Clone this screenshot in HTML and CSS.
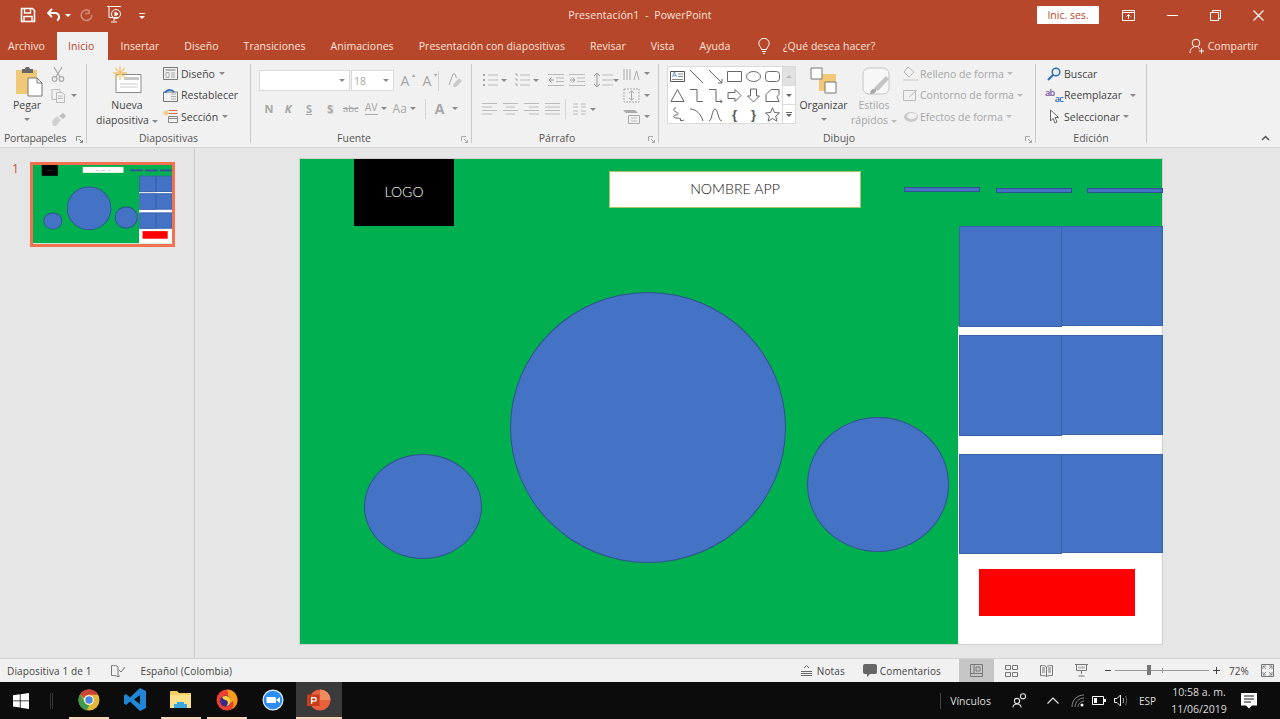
FILE: index.html
```html
<!DOCTYPE html>
<html lang="es">
<head>
<meta charset="utf-8">
<title>Presentación1 - PowerPoint</title>
<link rel="stylesheet" href="styles.css">
</head>
<body>
<div class="app">
  <header class="titlebar">
    <div class="qat">
      <svg width="16" height="16" viewBox="0 0 16 16" fill="none" stroke="#fff" stroke-width="1.6"><path d="M1.5 1.5h11l2 2v11h-13z"/><path d="M4.5 2v4h6V2M4 14.5V9.5h8v5" stroke-width="1.4"/></svg>
      <svg class="q-undo" width="16" height="14" viewBox="0 0 16 14" fill="none" stroke="#fff" stroke-width="1.8"><path d="M6 1L2 5l4 4"/><path d="M2 5h7a4 4 0 0 1 2 7.5"/></svg>
      <span class="caret-w"></span>
      <svg class="q-redo" width="14" height="14" viewBox="0 0 14 14" fill="none" stroke="#cf8b78" stroke-width="1.6"><path d="M9 1.5v4h-4M9 2.5a5.3 5.3 0 1 0 2.8 4.5"/></svg>
      <svg class="q-show" width="18" height="20" viewBox="0 0 18 20" fill="none" stroke="#fff" stroke-width="1"><path d="M1 1.5h14M3 1.5v11h10M8 13v3M5 17h6"/><circle cx="10" cy="9" r="4.5"/><path d="M9 7l3 2-3 2z" fill="#fff"/></svg>
      <span class="q-more"></span>
    </div>
    <div class="doc-title">Presentación1 &nbsp;-&nbsp; PowerPoint</div>
    <div class="win">
      <span class="signin">Inic. ses.</span>
      <svg width="13" height="11" viewBox="0 0 13 11" fill="none" stroke="#fff"><path d="M.5.5h12v10H.5zM.5 2.5h12M6.5 9V4.5M4.5 6.5l2-2 2 2"/></svg>
      <svg class="w-min" width="11" height="1" viewBox="0 0 11 1"><path d="M0 0h11v1H0z" fill="#fff"/></svg>
      <svg width="11" height="11" viewBox="0 0 11 11" fill="none" stroke="#fff"><path d="M.5 2.5h8v8h-8zM2.5 2.5v-2h8v8h-2"/></svg>
      <svg width="11" height="11" viewBox="0 0 11 11" fill="none" stroke="#fff" stroke-width="1.1"><path d="M.5.5l10 10M10.5.5l-10 10"/></svg>
    </div>
  </header>

  <nav class="tabs">
    <span class="tab tab-first">Archivo</span>
    <span class="tab active">Inicio</span>
    <span class="tab">Insertar</span>
    <span class="tab">Diseño</span>
    <span class="tab">Transiciones</span>
    <span class="tab">Animaciones</span>
    <span class="tab">Presentación con diapositivas</span>
    <span class="tab">Revisar</span>
    <span class="tab">Vista</span>
    <span class="tab">Ayuda</span>
    <svg class="bulb" width="12" height="16" viewBox="0 0 12 16" fill="none" stroke="#fff"><path d="M3.5 11.5C3 9 .8 8 .8 5.5a5.2 5.2 0 0 1 10.4 0C11.2 8 9 9 8.5 11.5zM4 13.5h4M5 15.5h2"/></svg>
    <span class="tell">¿Qué desea hacer?</span>
    <span class="share">
      <svg width="16" height="16" viewBox="0 0 16 16" fill="none" stroke="#fff"><circle cx="7" cy="5" r="3.8"/><path d="M1 15c0-4 2-5.5 4-6M9 9.5c1 .3 1.5.7 2 1.3M12.5 10.5v5M10 13h5"/></svg>
      Compartir
    </span>
  </nav>

  <section class="ribbon">
    <div class="group g-clip">
      <div class="body">
        <div class="big big-paste">
          <svg width="28" height="30" viewBox="0 0 28 30"><path d="M1 3h21v24H1z" fill="#f0c878"/><path d="M7 2h3l1-2h3l1 2h3v4H7z" fill="#666"/><path d="M13 11h9l5 5v13H13z" fill="#fff" stroke="#777"/><path d="M22 11v5h5" fill="none" stroke="#777"/></svg>
          <span class="big-label">Pegar</span>
          <span class="caret"></span>
        </div>
        <div class="stack stack-clip">
          <svg width="14" height="16" viewBox="0 0 14 16" fill="none" stroke="#a9a9a9" stroke-width="1.2"><path d="M3 1l6 10M11 1L5 11"/><circle cx="3.5" cy="13" r="2.3"/><circle cx="10.5" cy="13" r="2.3"/></svg>
          <span class="row-ic"><svg width="16" height="14" viewBox="0 0 16 14" fill="none" stroke="#bbb"><path d="M1 .5h8v3M1 .5v10h4M5.5 3.5h6l2 2v8h-8zM7 7h5M7 9.5h5"/></svg><span class="caret caret-s"></span></span>
          <svg width="16" height="14" viewBox="0 0 16 14"><path d="M1 8l5-5 4 4-5 6H2z" fill="#d0d0d0"/><path d="M8 3l4-3 3 3-3 3z" fill="#bdbdbd"/></svg>
        </div>
      </div>
      <div class="glabel">Portapapeles<svg class="launch" width="7" height="7" viewBox="0 0 7 7" fill="none" stroke="#888"><path d="M.5 5V.5H5M3 3l3.5 3.5M6.5 4v2.5H4"/></svg></div>
    </div>

    <div class="group g-slides">
      <div class="body">
        <div class="big big-new">
          <svg width="30" height="29" viewBox="0 0 30 29" fill="none"><path d="M4 8.5h25v18H4z" fill="#fff" stroke="#8a8a8a"/><path d="M12 11h15v3H12z" fill="#c8c8c8"/><path d="M8 18h18M8 21h18" stroke="#ccc"/><path d="M8 0v14M1 7h14M3 2l10 10M13 2L3 12" stroke="#f2c46f" stroke-width="1.3"/></svg>
          <span class="big-label">Nueva<br>diapositiva<span class="caret caret-in"></span></span>
        </div>
        <div class="stack">
          <span class="row"><svg width="15" height="13" viewBox="0 0 15 13" fill="none" stroke="#777"><path d="M.5.5h14v12H.5zM2.5 3h10"/><path d="M3 5.5h3v5H3zM8 6h4M8 8h4M8 10h4" stroke="#aaa"/></svg>Diseño<span class="caret"></span></span>
          <span class="row"><svg width="15" height="13" viewBox="0 0 15 13" fill="none"><path d="M.5 3h14v9.5H.5z" stroke="#777"/><path d="M8 5h5M8 7.5h5M8 10h5" stroke="#aaa"/><path d="M2 4c2-4 7-4 9-1" stroke="#2f6fb5" stroke-width="1.6"/></svg>Restablecer</span>
          <span class="row"><svg width="15" height="13" viewBox="0 0 15 13" fill="none"><path d="M6 3.5h8.5M6 .5h8.5" stroke="#d9663f"/><path d="M5.5 6.5h9v6h-9zM5.5 8.5h9" stroke="#888"/><path d="M3 0v6M0 3h6M1 1l4 4M5 1L1 5" stroke="#f2c46f"/></svg>Sección<span class="caret"></span></span>
        </div>
      </div>
      <div class="glabel">Diapositivas</div>
    </div>

    <div class="group g-font">
      <div class="body body-col">
        <div class="frow frow-top">
          <span class="combo combo-name"><span class="caret"></span></span>
          <span class="combo combo-size">18<span class="caret"></span></span>
          <span class="dis glyph ga1">A<span class="sup">▴</span></span>
          <span class="dis glyph ga2">A<span class="sup">▾</span></span>
          <span class="vsep"></span>
          <svg class="ga3" width="16" height="15" viewBox="0 0 16 15"><path d="M2 12L6 1h2l1.5 4" fill="none" stroke="#aaa"/><path d="M6 12l6-7 3 3-6 6H7z" fill="#c9c9c9"/></svg>
        </div>
        <div class="frow frow-bot">
          <b class="dis fmt f-n">N</b>
          <b class="dis fmt f-k">K</b>
          <b class="dis fmt f-s">S</b>
          <b class="dis fmt f-sh">S</b>
          <span class="dis f-abc">abc</span>
          <span class="dis f-av">AV<span class="av-line"></span></span><span class="caret"></span>
          <span class="dis f-aa">Aa</span><span class="caret"></span>
          <span class="vsep vsep2"></span>
          <b class="dis f-a">A</b><span class="caret"></span>
        </div>
      </div>
      <div class="glabel">Fuente<svg class="launch" width="7" height="7" viewBox="0 0 7 7" fill="none" stroke="#aaa"><path d="M.5 5V.5H5M3 3l3.5 3.5M6.5 4v2.5H4"/></svg></div>
    </div>

    <div class="group g-para">
      <div class="body">
        <div class="para-left">
          <div class="frow prow">
            <svg width="16" height="14" viewBox="0 0 16 14" fill="none" stroke="#bbb"><path d="M6 2h10M6 7h10M6 12h10"/><path d="M1 2h2M1 7h2M1 12h2" stroke="#aaa" stroke-width="2"/></svg><span class="caret"></span>
            <svg width="16" height="14" viewBox="0 0 16 14" fill="none" stroke="#bbb"><path d="M6 2h10M6 7h10M6 12h10"/><path d="M1 1h2v2M1 6h2v2M1 11h2v2" stroke="#aaa"/></svg><span class="caret"></span>
            <svg class="p-ind" width="16" height="12" viewBox="0 0 16 12" fill="none" stroke="#bbb"><path d="M0 .5h16M8 4h8M8 7.5h8M0 11.5h16"/><path d="M6 6H1M3.5 3.5L1 6l2.5 2.5" stroke="#999"/></svg>
            <svg class="p-out" width="16" height="12" viewBox="0 0 16 12" fill="none" stroke="#bbb"><path d="M0 .5h16M8 4h8M8 7.5h8M0 11.5h16"/><path d="M1 6h5M3.5 3.5L6 6 3.5 8.5" stroke="#999"/></svg>
            <svg class="p-line" width="20" height="16" viewBox="0 0 20 16" fill="none" stroke="#bbb"><path d="M9 3h11M9 8h11M9 13h11"/><path d="M4 1v14M1 4l3-3 3 3M1 12l3 3 3-3" stroke="#999"/></svg><span class="caret caret-line"></span>
          </div>
          <div class="frow prow2">
            <svg width="15" height="12" viewBox="0 0 15 12" fill="none" stroke="#bbb"><path d="M0 .5h15M0 4h10M0 7.5h15M0 11h10"/></svg>
            <svg width="15" height="12" viewBox="0 0 15 12" fill="none" stroke="#bbb"><path d="M0 .5h15M3 4h9M0 7.5h15M3 11h9"/></svg>
            <svg width="15" height="12" viewBox="0 0 15 12" fill="none" stroke="#bbb"><path d="M0 .5h15M5 4h10M0 7.5h15M5 11h10"/></svg>
            <svg width="15" height="12" viewBox="0 0 15 12" fill="none" stroke="#bbb"><path d="M0 .5h15M0 4h15M0 7.5h15M0 11h15"/></svg>
            <span class="vsep vsep3"></span>
            <svg class="p-cols" width="13" height="12" viewBox="0 0 13 12" fill="none" stroke="#bbb"><path d="M0 1h5M0 4h5M0 8h5M0 11h5M8 1h5M8 4h5M8 8h5M8 11h5"/></svg><span class="caret"></span>
          </div>
        </div>
        <div class="stack stack-para">
          <span class="row-ic"><svg width="17" height="15" viewBox="0 0 17 15" fill="none" stroke="#aaa"><path d="M1 3v11M4 3v11M7 3v11M11 14l2.5-9 2.5 9"/></svg><span class="caret"></span></span>
          <span class="row-ic"><svg width="17" height="15" viewBox="0 0 17 15" fill="none" stroke="#aaa" stroke-dasharray="2 1"><path d="M1 1h15v13H1z"/><path d="M8.5 3v9M6 5l2.5-2L11 5M6 10l2.5 2 2.5-2" stroke-dasharray="none"/></svg><span class="caret"></span></span>
          <span class="row-ic"><svg width="17" height="15" viewBox="0 0 17 15"><path d="M0 1h12l3 3H3z" fill="#aaa"/><path d="M5.5 6.5h11v8h-11z" fill="#f1f1f1" stroke="#aaa"/><path d="M8 9h6M8 12h6" stroke="#bbb"/></svg><span class="caret"></span></span>
        </div>
      </div>
      <div class="glabel">Párrafo<svg class="launch" width="7" height="7" viewBox="0 0 7 7" fill="none" stroke="#aaa"><path d="M.5 5V.5H5M3 3l3.5 3.5M6.5 4v2.5H4"/></svg></div>
    </div>

    <div class="group g-draw">
      <div class="body">
        <div class="gallery">
          <div class="shapes">
            <svg width="15" height="15" viewBox="0 0 15 15" fill="none"><path d="M.5 2.5h14v10H.5z" stroke="#555"/><text x="2" y="8" font-size="7" font-family="Liberation Sans" fill="#3f7fc4">A</text><path d="M8 5h5M8 7.5h5M2 10.5h11" stroke="#8a8a8a"/></svg>
            <svg width="15" height="15" viewBox="0 0 15 15" fill="none" stroke="#666"><path d="M1 1l13 13"/></svg>
            <svg width="15" height="15" viewBox="0 0 15 15" fill="none" stroke="#666"><path d="M1 1l13 13M10 14h4v-4"/></svg>
            <svg width="15" height="15" viewBox="0 0 15 15" fill="none" stroke="#666"><path d="M.5 2.5h14v10H.5z"/></svg>
            <svg width="15" height="15" viewBox="0 0 15 15" fill="none" stroke="#666"><ellipse cx="7.5" cy="7.5" rx="7" ry="5"/></svg>
            <svg width="15" height="15" viewBox="0 0 15 15" fill="none" stroke="#666"><rect x=".5" y="2.5" width="14" height="10" rx="3"/></svg>
            <svg width="15" height="15" viewBox="0 0 15 15" fill="none" stroke="#666"><path d="M7.5 1.5l6.5 12H1z"/></svg>
            <svg width="15" height="15" viewBox="0 0 15 15" fill="none" stroke="#666"><path d="M1 1.5h7v12h6"/></svg>
            <svg width="15" height="15" viewBox="0 0 15 15" fill="none" stroke="#666"><path d="M1 1.5h7v12h6M12 11.5l2 2-2 2"/></svg>
            <svg width="15" height="15" viewBox="0 0 15 15" fill="none" stroke="#666"><path d="M1 4.5h7V1.500l6 6-6 6v-3H1z"/></svg>
            <svg width="15" height="15" viewBox="0 0 15 15" fill="none" stroke="#666"><path d="M4.5 1h6v7h3l-6 6-6-6h3z"/></svg>
            <svg width="15" height="15" viewBox="0 0 15 15" fill="none" stroke="#666"><path d="M1 13.5v-7l5-5h8v5l-2 2 2 5z"/></svg>
            <svg width="15" height="15" viewBox="0 0 15 15" fill="none" stroke="#666"><path d="M6 1C3 1 3 4 6 5S9 8 6 8s-3 3 0 3 4 0 5 3M10 11l1 3 3-1"/></svg>
            <svg width="15" height="15" viewBox="0 0 15 15" fill="none" stroke="#666"><path d="M1 2c6 0 11 5 13 12"/></svg>
            <svg width="15" height="15" viewBox="0 0 15 15" fill="none" stroke="#666"><path d="M1 14C4 14 4 2 7 2s3 12 7 12"/></svg>
            <span class="brace">{</span>
            <span class="brace">}</span>
            <svg width="15" height="15" viewBox="0 0 15 15" fill="none" stroke="#666"><path d="M7.5.8l2 4.7 5 .4-3.800 3.300 1.200 5-4.400-2.700-4.400 2.700 1.200-5L.5 5.900l5-.4z"/></svg>
          </div>
          <div class="scroller">
            <span class="sb sb-up"></span>
            <span class="sb sb-down"></span>
            <span class="sb sb-more"></span>
          </div>
        </div>
        <div class="big big-org">
          <svg width="28" height="28" viewBox="0 0 28 28"><path d="M9 7h17v17H9z" fill="#f0c878"/><path d="M1 1h11v11H1zM15 15h11v11H15z" fill="#fff" stroke="#777"/></svg>
          <span class="big-label">Organizar</span>
          <span class="caret"></span>
        </div>
        <div class="big big-styles dis">
          <svg width="28" height="28" viewBox="0 0 28 28" fill="none"><rect x="1" y="1" width="26" height="26" rx="6" fill="#f7f7f7" stroke="#c4c4c4"/><path d="M12 21l12-12 3 3-11 12z" fill="#c4c4c4"/><path d="M8 27c0-4 3-6 6-5 1 3-2 5-6 5z" fill="#a8a8a8"/></svg>
          <span class="big-label">Estilos<br>rápidos<span class="caret caret-in"></span></span>
        </div>
        <div class="stack stack-shape dis">
          <span class="row"><svg width="16" height="15" viewBox="0 0 16 15" fill="none" stroke="#bbb"><path d="M5 1l6 5-5 5-5-5z"/><path d="M0 14h15" stroke="#ddd" stroke-width="2"/></svg>Relleno de forma<span class="caret"></span></span>
          <span class="row"><svg width="16" height="15" viewBox="0 0 16 15" fill="none" stroke="#bbb"><path d="M.5 2.5h12v10H.5zM6 9l8-7"/></svg>Contorno de forma<span class="caret"></span></span>
          <span class="row"><svg width="16" height="15" viewBox="0 0 16 15"><ellipse cx="8" cy="8" rx="7" ry="5" fill="#c9c9c9"/><ellipse cx="9" cy="7" rx="5" ry="3" fill="#f1f1f1"/></svg>Efectos de forma<span class="caret"></span></span>
        </div>
      </div>
      <div class="glabel">Dibujo<svg class="launch" width="7" height="7" viewBox="0 0 7 7" fill="none" stroke="#aaa"><path d="M.5 5V.5H5M3 3l3.5 3.5M6.5 4v2.5H4"/></svg></div>
    </div>

    <div class="group g-edit">
      <div class="body">
        <div class="stack stack-edit">
          <span class="row"><svg width="14" height="14" viewBox="0 0 14 14" fill="none" stroke="#2f6fb5"><circle cx="9" cy="5" r="3.8" stroke-width="1.5"/><path d="M6 8l-5 5" stroke-width="2.2"/></svg>Buscar</span>
          <span class="row"><span class="abc"><span class="abc-a">ab</span><span class="abc-c">ac</span></span>Reemplazar<span class="caret caret-far"></span></span>
          <span class="row"><svg width="14" height="15" viewBox="0 0 14 15" fill="#fff" stroke="#666"><path d="M3.5 1v11l2.5-2.5 2 4.5 2-1-2-4.500h3.500z"/></svg>Seleccionar<span class="caret"></span></span>
        </div>
      </div>
      <div class="glabel">Edición</div>
    </div>
    <svg class="collapse" width="9" height="6" viewBox="0 0 9 6" fill="none" stroke="#555" stroke-width="1.5"><path d="M1 5l3.5-3.5L8 5"/></svg>
  </section>

  <main class="workspace">
    <aside class="panel">
      <span class="num">1</span>
      <div class="thumb">
        <div class="slide slide-mini">
          <div class="sh logo">LOGO</div>
          <div class="sh appname">NOMBRE APP</div>
          <div class="sh bar b1"></div><div class="sh bar b2"></div><div class="sh bar b3"></div>
          <div class="sh white"></div>
          <div class="sh bl c1r1"></div><div class="sh bl c2r1"></div>
          <div class="sh bl c1r2"></div><div class="sh bl c2r2"></div>
          <div class="sh bl c1r3"></div><div class="sh bl c2r3"></div>
          <div class="sh red"></div>
          <div class="sh bl round big-c"></div><div class="sh bl round left-c"></div><div class="sh bl round right-c"></div>
        </div>
      </div>
    </aside>
    <div class="stage">
      <div class="slide">
        <div class="sh logo">LOGO</div>
        <div class="sh appname">NOMBRE APP</div>
        <div class="sh bar b1"></div><div class="sh bar b2"></div><div class="sh bar b3"></div>
        <div class="sh white"></div>
        <div class="sh bl c1r1"></div><div class="sh bl c2r1"></div>
        <div class="sh bl c1r2"></div><div class="sh bl c2r2"></div>
        <div class="sh bl c1r3"></div><div class="sh bl c2r3"></div>
        <div class="sh red"></div>
        <div class="sh bl round big-c"></div><div class="sh bl round left-c"></div><div class="sh bl round right-c"></div>
      </div>
    </div>
  </main>

  <footer class="status">
    <span class="st-count">Diapositiva 1 de 1</span>
    <svg class="st-book" width="14" height="14" viewBox="0 0 14 14" fill="none" stroke="#777"><path d="M7 3C6 1.5 3 1.5.5 1.5v10c2.5 0 5 0 6.5 1.5V3zM7 13c.5-.5 1-1 2-1.2M8 6l2 2 4-5"/></svg>
    <span class="st-lang">Español (Colombia)</span>
    <span class="st-notes"><svg width="11" height="11" viewBox="0 0 11 11" fill="none" stroke="#666"><path d="M0 6.5h11M0 8.5h11M0 10.5h11M3 3l2.5-2.5L8 3"/></svg>Notas</span>
    <span class="st-com"><svg width="14" height="13" viewBox="0 0 14 13"><path d="M2 0h10a2 2 0 0 1 2 2v6a2 2 0 0 1-2 2H7l-3 3v-3H2a2 2 0 0 1-2-2V2a2 2 0 0 1 2-2z" fill="#666"/></svg>Comentarios</span>
    <span class="view view-on"><svg width="13" height="13" viewBox="0 0 13 13" fill="none" stroke="#777"><path d="M.5.5h12v12H.5zM.5 9.5h12M4 .5v9M6 3h4v4H6z"/></svg></span>
    <span class="view"><svg width="13" height="12" viewBox="0 0 13 12" fill="none" stroke="#777"><path d="M.5.5h5v4h-5zM7.5.5h5v4h-5zM.5 7.5h5v4h-5zM7.5 7.5h5v4h-5z"/></svg></span>
    <span class="view"><svg width="13" height="12" viewBox="0 0 13 12" fill="none" stroke="#777"><path d="M6.5 2C5 .5 3 .5.5.5v10c2.5 0 4.5 0 6 1 1.5-1 3.5-1 6-1V.5C10 .5 8 .5 6.5 2zM6.5 2v9.500M2 3h3M2 5h3M2 7h3M8 3h3M8 5h3M8 7h3"/></svg></span>
    <span class="view"><svg width="13" height="13" viewBox="0 0 13 13" fill="none" stroke="#777"><path d="M0 .5h13M1.5.5v6h10v-6M6.5 6.5V10M3.5 12h6"/><path d="M3 2.5h7v2H3z" fill="#bbb" stroke="none"/></svg></span>
    <div class="zoomer">
      <span class="z-minus"></span>
      <span class="z-track"><span class="z-tick"></span><span class="z-thumb"></span></span>
      <span class="z-plus"></span>
    </div>
    <span class="z-val">72%</span>
    <svg class="fit" width="13" height="13" viewBox="0 0 13 13" fill="none" stroke="#777"><path d="M.5.5h12v12H.5z"/><path d="M2 2l3 3M2 5V2h3M11 11L8 8M11 8v3H8M11 2L8 5M8 2h3v3M2 11l3-3M5 11H2V8" stroke-width=".8"/></svg>
  </footer>

  <div class="taskbar">
    <svg class="tb-win" width="16" height="16" viewBox="0 0 16 16" fill="#fff"><path d="M0 2.3l6.8-1v6.2H0zM7.6 1.2L16 0v7.5H7.6zM0 8.3h6.8v6.3l-6.8-1zM7.6 8.3H16V16l-8.4-1.2z"/></svg>
    <span class="tb-grip"></span>
    <span class="app-ic run"><svg width="22" height="22" viewBox="0 0 22 22"><circle cx="11" cy="11" r="10.5" fill="#e2b93b"/><path d="M11 .5a10.5 10.5 0 0 1 9.100 5.300H11a5.200 5.200 0 0 0-5 3.700L2.300 5A10.500 10.500 0 0 1 11 .5z" fill="#cf4236"/><path d="M2.300 5l4.400 8.600a5.200 5.200 0 0 0 4.600 2.600L8.600 21.300A10.500 10.500 0 0 1 2.300 5z" fill="#3f9a4e"/><circle cx="11" cy="11" r="4.800" fill="#fff"/><circle cx="11" cy="11" r="3.700" fill="#4a86e0"/></svg></span>
    <span class="app-ic"><svg width="22" height="23" viewBox="0 0 22 23"><path d="M16 0l6 3v17l-6 3L6 13.500 2 17l-2-1.500V7.500L2 6l4 3.500zM16 7l-6 4.500 6 4.500z" fill="#1f87d6" fill-rule="evenodd"/></svg></span>
    <span class="app-ic run"><svg width="22" height="19" viewBox="0 0 22 19"><path d="M0 2a1 1 0 0 1 1-1h6l2 2h12v15H0z" fill="#f3cf63"/><path d="M0 5h21v13H0z" fill="#fbe08b"/><path d="M7 12h7v2h3v4H4v-4h3z" fill="#3aa6e0"/></svg></span>
    <span class="app-ic run"><svg width="22" height="22" viewBox="0 0 22 22"><circle cx="11" cy="11" r="10.500" fill="#e8412f"/><path d="M11 .5c6 0 10.500 4.700 10.500 10.500 0 5-3 8-6 9 2-2 3-5 1-8-1 2-3 2-4 2 1-2 1-4-1-5 1-2 1-5-.5-8.500z" fill="#f99a1c"/><circle cx="9.500" cy="12" r="5.500" fill="#3b2a8c"/><path d="M6 8c3-2 8-1 9 3 0 3-2 6-5 6 3-2 2-5 0-6-2 0-3-1-4-3z" fill="#ffcf3a"/></svg></span>
    <span class="app-ic"><svg width="22" height="22" viewBox="0 0 22 22"><circle cx="11" cy="11" r="10.500" fill="#e9f1fb"/><circle cx="11" cy="11" r="9.300" fill="#2d8cf0"/><path d="M4.500 8h8a1.500 1.500 0 0 1 1.500 1.500V14H6a1.500 1.500 0 0 1-1.500-1.500zM14.700 10.500L18 8v6l-3.300-2.500z" fill="#fff"/></svg></span>
    <span class="app-ic run on"><svg width="24" height="22" viewBox="0 0 24 22"><circle cx="13" cy="11" r="10.500" fill="#e8613c"/><path d="M13 .5a10.500 10.500 0 0 1 10.500 10.500H13z" fill="#f08a60"/><path d="M0 5.500h12.500v11.500H0z" fill="#c43e1c"/><path d="M4 8h3.500a2.300 2.300 0 0 1 0 4.800H5.300V15H4zM5.300 9.200v2.400h2a1.200 1.200 0 0 0 0-2.400z" fill="#fff" fill-rule="evenodd"/></svg></span>
    <div class="tray">
      <span class="tray-sep"></span>
      <span class="tr-links">Vínculos</span>
      <svg class="tr-people" width="15" height="15" viewBox="0 0 15 15" fill="none" stroke="#ddd" stroke-width="1.1"><circle cx="5" cy="8" r="2.600"/><path d="M.8 14.500c.4-2.500 2-3.500 4.200-3.500s3.800 1 4.200 3.500"/><circle cx="11" cy="3.300" r="2.600"/></svg>
      <svg class="tr-up" width="12" height="7" viewBox="0 0 12 7" fill="none" stroke="#eee" stroke-width="1.1"><path d="M.5 6.500L6 1l5.500 5.500"/></svg>
      <svg class="tr-wifi" width="13" height="13" viewBox="0 0 13 13" fill="none" stroke="#888"><path d="M1 13C1 6 6 1 13 1M4 13c0-5 4-9 9-9M7 13c0-3 3-6 6-6"/><circle cx="11" cy="11" r="1.500" fill="#fff" stroke="none"/></svg>
      <svg class="tr-bat" width="14" height="9" viewBox="0 0 14 9" fill="none" stroke="#fff"><path d="M.5.5h11v8H.5z"/><path d="M12 3h2v3h-2z" fill="#fff" stroke="none"/><path d="M2 2h3v5H2z" fill="#fff" stroke="none"/></svg>
      <svg class="tr-vol" width="15" height="13" viewBox="0 0 15 13" fill="none" stroke="#eee"><path d="M.5 4.500h2.500L6.500 1v11L3 8.500H.5z"/><path d="M9 4c.8 1.500.8 3.500 0 5" stroke="#bbb"/><path d="M11.500 2c1.500 3 1.500 6 0 9" stroke="#666"/></svg>
      <span class="tr-lang">ESP</span>
      <span class="tr-clock">10:58 a. m.<br>11/06/2019</span>
      <svg class="tr-note" width="16" height="16" viewBox="0 0 16 16"><path d="M0 0h16v12.500h-5L8 15.500l-3-3H0z" fill="#fff" fill-rule="evenodd"/><path d="M3 3h10M3 6h10M3 9h7" stroke="#111"/></svg>
    </div>
  </div>
</div>
</body>
</html>
```
FILE: styles.css
```css
* { box-sizing: border-box; }
html, body { margin: 0; padding: 0; height: 100%; overflow: hidden; }
body { font-family: "Open Sans", "Noto Sans", sans-serif; font-size: 10.5px; color: #444; background: #e6e6e6; }
svg { flex: none; display: block; }
.app { width: 1280px; height: 719px; display: flex; flex-direction: column; }

/* title bar */
.titlebar { height: 30px; background: #b7472a; color: #fff; display: grid; grid-template-columns: 1fr auto 1fr; align-items: center; }
.qat { display: flex; align-items: center; padding-left: 20px; }
.q-undo { margin-left: 10px; }
.caret-w { width: 0; height: 0; border: 3px solid transparent; border-top-color: #fff; border-bottom: 0; margin-left: 3px; }
.q-redo { margin-left: 9px; }
.q-show { margin-left: 12px; }
.q-more { margin-left: 15px; width: 6px; height: 5px; border-top: 1px solid #fff; position: relative; }
.q-more::after { content: ""; position: absolute; left: 0; top: 2px; border: 3px solid transparent; border-top-color: #fff; border-bottom: 0; }
.doc-title { font-size: 10.5px; color: #f7e3dc; letter-spacing: .1px; }
.win { display: flex; align-items: center; justify-content: flex-end; padding-right: 16px; }
.win svg { margin-left: 32px; }
.win svg:first-of-type { margin-left: 23px; }
.signin { width: 62px; height: 18px; background: #fff; color: #b7472a; font-size: 10.5px; display: flex; align-items: center; justify-content: center; border-radius: 1px; }

/* tabs */
.tabs { height: 30px; background: #b7472a; display: flex; align-items: flex-end; color: #f8e4dd; font-size: 10.5px; letter-spacing: .05px; }
.tab { height: 28px; padding: 0 12.5px; display: flex; align-items: center; }
.tab-first { padding: 0 12px 0 8px; }
.active { background: #f1f1f1; color: #b7472a; padding: 0 11px; width: 51px; }
.bulb { margin: 0 0 6px 15px; }
.tell { margin-left: 13px; height: 28px; display: flex; align-items: center; }
.share { margin-left: auto; padding-right: 22px; height: 28px; display: flex; align-items: center; gap: 3px; }

/* ribbon */
.ribbon { height: 88px; background: #f1f1f1; border-bottom: 1px solid #d2d2d2; display: flex; position: relative; align-items: flex-start; }
.group { height: 79px; margin-top: 4px; display: flex; flex-direction: column; border-right: 1px solid #c9c9c9; position: relative; }
.body { height: 67px; display: flex; flex: none; }
.body-col { flex-direction: column; }
.glabel { height: 14px; line-height: 14px; margin-bottom: -2px; text-align: center; font-size: 10.5px; color: #555; }
.launch { position: absolute; right: 3px; bottom: 0; }
.g-clip { width: 87px; }
.g-clip .glabel { text-align: left; padding-left: 4px; letter-spacing: -.2px; }
.g-slides { width: 164px; }
.g-font { width: 221px; }
.g-font .glabel { padding-right: 14px; }
.g-para { width: 187px; }
.g-para .glabel { padding-right: 16px; }
.g-draw { width: 377px; }
.g-draw .glabel { padding-right: 16px; }
.g-edit { width: 111px; }
.caret { display: inline-block; width: 0; height: 0; border: 3px solid transparent; border-top-color: #888; border-bottom: 0; flex: none; }
.big { display: flex; flex-direction: column; align-items: center; text-align: center; line-height: 15px; }
.big-label { margin-top: 3px; white-space: nowrap; }
.big > .caret { margin-top: 5px; }
.caret-in { margin-left: 3px; vertical-align: middle; }
.big-paste { width: 42px; margin-left: 6px; padding-top: 3px; }
.big-paste svg { margin-left: 4px; }
.big-paste .big-label { margin-top: 1px; }
.stack { display: flex; flex-direction: column; margin-top: -1px; }
.stack > * { height: 21.5px; display: flex; align-items: center; }
.stack-clip { margin-left: 3px; }
.stack-clip > svg { height: auto; margin: 3px 0; }
.stack-clip > svg:last-child { margin-top: 6px; }
.row { gap: 3px; white-space: nowrap; }
.row .caret { margin-left: 1px; }
.row-ic { gap: 4px; }
.big-new { width: 68px; margin-left: 6px; padding-top: 2px; }
.g-slides .stack { margin-left: 2px; }

/* font */
.dis { color: #a6a6a6; }
.frow { display: flex; align-items: center; }
.frow-top { padding: 6px 0 0 8px; }
.combo { height: 21px; background: #fff; border: 1px solid #d9d9d9; display: flex; align-items: center; justify-content: flex-end; padding: 0 4px 0 0; color: #a6a6a6; font-size: 10.5px; }
.combo-name { width: 91px; }
.combo-size { width: 43px; margin-left: 1px; justify-content: space-between; padding-left: 2px; }
.glyph { font-size: 14px; position: relative; width: 20px; text-align: center; }
.sup { font-size: 6px; position: absolute; top: 0; right: 0; }
.ga1 { margin-left: 1px; }
.ga2 { margin-left: 2px; }
.vsep { width: 1px; height: 20px; background: #d4d4d4; margin-left: 1px; }
.ga3 { margin-left: 8px; }
.frow-bot { padding: 6px 0 0 13px; height: 29px; }
.fmt { font-size: 11px; width: 10px; text-align: center; }
.f-k { margin-left: 9px; font-style: italic; }
.f-s { margin-left: 11px; text-decoration: underline; }
.f-sh { margin-left: 11px; text-shadow: 1px 1px 1px #ccc; }
.f-abc { margin-left: 8px; font-size: 9.5px; text-decoration: line-through; }
.f-av { margin-left: 6px; font-size: 10.5px; position: relative; line-height: 11px; padding-bottom: 2px; margin-right: 3px; }
.av-line { position: absolute; left: 0; right: 0; bottom: 0; height: 1px; background: #aaa; }
.f-aa { margin-left: 6px; font-size: 12px; margin-right: 3px; }
.vsep2 { margin-left: 9px; }
.f-a { margin-left: 9px; font-size: 14px; margin-right: 7px; }

/* paragraph */
.para-left { width: 151px; padding: 4px 0 0 10px; }
.prow { height: 24px; }
.prow > .caret { margin: 0 7px 0 3px; }
.prow > .caret-line { margin: 0; }
.p-ind { margin-left: 2px; }
.p-out { margin-left: 5px; }
.p-line { margin-left: 8px; }
.prow2 { margin-top: 5px; height: 24px; }
.prow2 svg + svg { margin-left: 6px; }
.vsep3 { margin-left: 5px; }
.prow2 .p-cols { margin-left: 7px; }
.prow2 .caret { margin-left: 4px; }

/* drawing */
.gallery { display: flex; height: 58px; margin: 2px 0 0 8px; width: 129px; border: 1px solid #dadada; background: #fff; }
.shapes { width: 114px; display: grid; grid-template-columns: repeat(6, 19px); grid-auto-rows: 19px; align-items: center; justify-items: center; }
.brace { font-family: "Liberation Sans", sans-serif; font-size: 13px; line-height: 15px; color: #555; font-weight: 700; }
.scroller { width: 13px; display: flex; flex-direction: column; border-left: 1px solid #dadada; }
.sb { flex: 1; border-bottom: 1px solid #dadada; display: flex; align-items: center; justify-content: center; }
.sb:last-child { border-bottom: 0; }
.sb::after { content: ""; border: 3px solid transparent; border-top-color: #666; border-bottom: 0; }
.sb-up { background: #e1e1e1; }
.sb-up::after { border-top: 0; border-bottom: 3px solid #bbb; }
.sb-more { flex-direction: column; gap: 1px; }
.sb-more::before { content: ""; width: 6px; height: 1px; background: #666; }
.big-org { width: 55px; padding-top: 3px; }
.big-styles { width: 44px; margin-left: 1px; padding-top: 3px; }
.big-styles svg { margin-left: 3px; }
.big-styles .caret { border-top-color: #bbb; }
.stack-shape { margin-left: 7px; }
.stack-shape .caret { border-top-color: #bbb; }
.stack-shape .row { gap: 1px; }
.stack-shape .row .caret { margin-left: 2px; }

/* editing */
.stack-edit { margin-left: 9px; }
.stack-edit .row { gap: 0; color: #444; }
.stack-edit svg { margin: 0 3px 0 2px; }
.abc { width: 19px; display: flex; font-size: 9px; line-height: 9px; font-weight: 600; letter-spacing: -.6px; }
.abc-a { color: #7a4fa0; transform: translateY(-3px); }
.abc-c { color: #2f6fb5; transform: translateY(3px); }
.stack-edit .caret { margin-left: 3px; }
.stack-edit .caret-far { margin-left: 8px; }
.collapse { position: absolute; right: 10px; bottom: 6px; }

/* workspace */
.workspace { height: 510px; display: flex; background: #e6e6e6; }
.panel { width: 195px; border-right: 1px solid #c8c8c8; padding: 14px 0 0 12px; display: flex; }
.num { font-size: 12px; line-height: 14px; color: #c8553a; width: 18px; }
.thumb { width: 145px; height: 85px; border: 3px solid #f4714f; background: #fff; overflow: hidden; }
.stage { flex: 1; padding: 11px 0 0 105px; }
.slide { width: 862px; height: 485px; background: #00b050; position: relative; box-shadow: 0 0 0 1px #cfcfcf; }
.slide-mini { transform: scale(.1613); transform-origin: 0 0; box-shadow: none; }
.sh { position: absolute; }
.logo { left: 54px; top: 0; width: 100px; height: 67px; background: #000; color: #fff; font-size: 14px; font-weight: 300; font-family: "Lato", "Liberation Sans", sans-serif; display: flex; align-items: center; justify-content: center; padding-bottom: 2px; }
.appname { left: 309px; top: 12px; width: 252px; height: 37px; background: #fff; border: 1px solid #a9c46c; color: #111; font-size: 14.2px; font-weight: 300; font-family: "Lato", "Liberation Sans", sans-serif; display: flex; align-items: center; justify-content: center; padding-bottom: 2px; }
.bar { background: #4472c4; border: 1px solid #2f528f; width: 76px; height: 5px; }
.b1 { left: 604px; top: 28px; }
.b2 { left: 696px; top: 29px; }
.b3 { left: 787px; top: 29px; }
.white { left: 658px; top: 167px; width: 204px; height: 318px; background: #fff; }
.bl { background: #4472c4; border: 1px solid #3a62a8; }
.c1r1 { left: 659px; top: 67px; width: 103px; height: 101px; }
.c2r1 { left: 761px; top: 67px; width: 102px; height: 100px; }
.c1r2 { left: 659px; top: 176px; width: 103px; height: 101px; }
.c2r2 { left: 761px; top: 176px; width: 102px; height: 100px; }
.c1r3 { left: 659px; top: 295px; width: 103px; height: 100px; }
.c2r3 { left: 761px; top: 295px; width: 102px; height: 99px; }
.red { left: 679px; top: 410px; width: 156px; height: 47px; background: #f00; }
.round { border-radius: 50%; border-color: #2f528f; }
.big-c { left: 210px; top: 133px; width: 276px; height: 271px; }
.left-c { left: 64px; top: 295px; width: 118px; height: 105px; }
.right-c { left: 507px; top: 258px; width: 142px; height: 135px; }
.slide-mini .bl, .slide-mini .bar { border-width: 5px; }

/* status bar */
.status { height: 24px; background: #f1f1f1; border-top: 1px solid #d2d2d2; display: flex; align-items: center; padding-left: 7px; color: #444; font-size: 10px; letter-spacing: .12px; }
.st-book { margin-left: 19px; }
.st-lang { margin-left: 16px; }
.st-notes { margin-left: auto; display: flex; align-items: center; gap: 5px; }
.st-com { margin-left: 18px; display: flex; align-items: center; gap: 3px; }
.view { width: 35px; height: 23px; display: flex; align-items: center; justify-content: center; }
.view-on { background: #c6c6c6; margin-left: 18px; }
.zoomer { display: flex; align-items: center; margin-left: 6px; }
.z-minus { width: 6px; height: 1px; background: #444; }
.z-track { width: 94px; height: 1px; background: #999; margin: 0 4px; position: relative; }
.z-thumb { position: absolute; left: 32px; top: -5px; width: 4px; height: 10px; background: #777; }
.z-tick { position: absolute; left: 47px; top: -2px; width: 1px; height: 5px; background: #999; }
.z-plus { width: 7px; height: 7px; background: linear-gradient(#444, #444) center/7px 1px no-repeat, linear-gradient(#444, #444) center/1px 7px no-repeat; }
.z-val { margin-left: 9px; width: 21px; letter-spacing: 0; }
.fit { margin: 0 6px 0 11px; }

/* taskbar */
.taskbar { height: 37px; background: #0c0c0c; display: flex; align-items: stretch; color: #ddd; }
.tb-win { align-self: center; margin-left: 13px; }
.tb-grip { width: 3px; height: 16px; align-self: center; margin-left: 21px; border-left: 1px solid #333; border-right: 1px solid #333; }
.app-ic { width: 46px; display: flex; align-items: center; justify-content: center; border-bottom: 2px solid transparent; }
.tb-grip + .app-ic { margin-left: 13px; }
.run { border-image: linear-gradient(to right, transparent 8%, #f6d8b8 8%, #f6d8b8 92%, transparent 92%) 1; }
.on { background: #3a3a3a; border-image: none; border-bottom-color: #f6d8b8; }
.tray { margin-left: auto; display: flex; align-items: center; font-size: 10.5px; }
.tray-sep { width: 1px; height: 16px; background: #444; }
.tr-links { margin-left: 9px; }
.tr-people { margin-left: 21px; }
.tr-up { margin-left: 20px; }
.tr-wifi { margin-left: 12px; }
.tr-bat { margin-left: 8px; }
.tr-vol { margin-left: 8px; }
.tr-lang { margin-left: 10px; font-size: 10px; }
.tr-clock { margin-left: 12px; width: 62px; text-align: center; line-height: 17px; font-size: 10.5px; }
.tr-note { margin: 0 23px 0 11px; }
```
